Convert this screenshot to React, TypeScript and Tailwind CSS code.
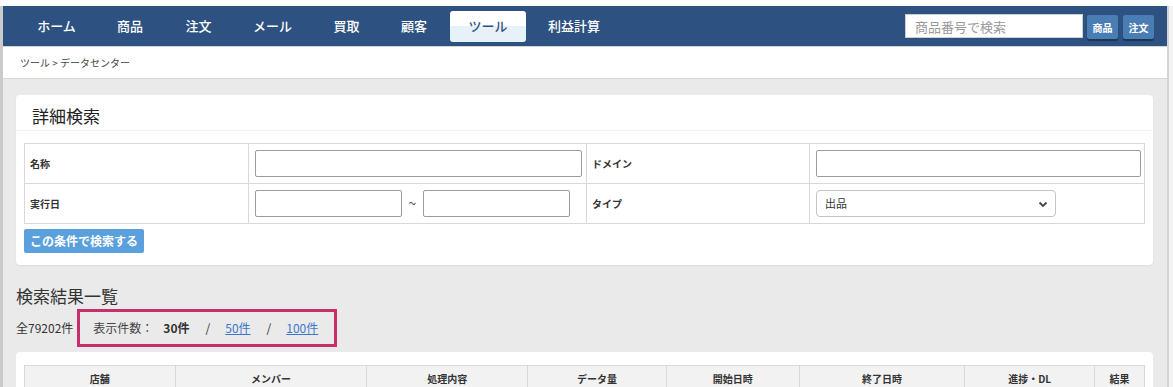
import React from "react";

const navItems = [
  { label: "ホーム", w: "w-[73px]" },
  { label: "商品", w: "w-[74px]" },
  { label: "注文", w: "w-[63px]" },
  { label: "メール", w: "w-[85px]" },
  { label: "買取", w: "w-[63px]" },
  { label: "顧客", w: "w-[72px]" },
  { label: "ツール", w: "w-[76px]", active: true },
  { label: "利益計算", w: "w-[96px]" },
];

const columns = [
  { label: "店舗", w: "w-[151px]" },
  { label: "メンバー", w: "w-[192px]" },
  { label: "処理内容", w: "w-[161px]" },
  { label: "データ量", w: "w-[139px]" },
  { label: "開始日時", w: "w-[133px]" },
  { label: "終了日時", w: "w-[166px]" },
  { label: "進捗・DL", w: "w-[130px]" },
  { label: "結果", w: "w-[50px]" },
];

function Header() {
  return (
    <div className="flex h-[40px] shrink-0 items-center bg-[#2d5281] pl-[17px] pr-[13px]">
      <nav className="flex items-center">
        {navItems.map((item) => (
          <a
            key={item.label}
            className={
              item.active
                ? `${item.w} flex h-[31px] items-center justify-center rounded-[3px] bg-gradient-to-b from-white from-50% to-[#e7f1f8] to-50% text-[13px] font-medium text-[#2d5281]`
                : `${item.w} flex h-[31px] items-center justify-center text-[13px] font-medium text-white`
            }
          >
            {item.label}
          </a>
        ))}
      </nav>
      <div className="ml-auto flex items-center">
        <input
          placeholder="商品番号で検索"
          className="h-[24px] w-[178px] border border-[#cfcfcf] bg-white px-[9px] text-[13px] text-[#333] placeholder:text-[#9a9a9a] outline-none"
        />
        <button className="ml-[4px] mt-[2px] h-[24px] w-[31px] rounded-[2px] bg-[#4a7db3] text-[10px] font-bold text-white shadow-[0_2px_1px_rgba(0,0,0,0.35)]">
          商品
        </button>
        <button className="ml-[5px] mt-[2px] h-[24px] w-[31px] rounded-[2px] bg-[#4a7db3] text-[10px] font-bold text-white shadow-[0_2px_1px_rgba(0,0,0,0.35)]">
          注文
        </button>
      </div>
    </div>
  );
}

function SearchCard() {
  return (
    <div className="rounded-[4px] bg-white shadow-[0_1px_2px_rgba(0,0,0,0.06)]">
      <div className="flex h-[36px] items-center border-b border-[#f1f1f1] pl-[16px]">
        <h2 className="mt-[6px] text-[17px] leading-none text-[#222]">詳細検索</h2>
      </div>
      <div className="px-[8px] pt-[12px] pb-[12px]">
        <table className="w-full border-collapse text-[10px] text-[#333]">
          <tbody>
            <tr className="h-[40px]">
              <td className="w-[224px] border border-[#d9d9d9] pl-[5px] font-bold">名称</td>
              <td className="w-[338px] border border-[#d9d9d9] pl-[6px] pr-[4px]">
                <input className="block h-[27px] w-full rounded-[2px] border border-[#9c9c9c] bg-white" />
              </td>
              <td className="w-[223px] border border-[#d9d9d9] pl-[5px] font-bold">ドメイン</td>
              <td className="border border-[#d9d9d9] pl-[6px] pr-[3px]">
                <input className="block h-[27px] w-full rounded-[2px] border border-[#9c9c9c] bg-white" />
              </td>
            </tr>
            <tr className="h-[40px]">
              <td className="border border-[#d9d9d9] pl-[5px] font-bold">実行日</td>
              <td className="border border-[#d9d9d9] pl-[6px]">
                <div className="flex items-center">
                  <input className="block h-[27px] w-[147px] rounded-[2px] border border-[#9c9c9c] bg-white" />
                  <span className="w-[21px] text-center text-[14px] text-[#555]">~</span>
                  <input className="block h-[27px] w-[147px] rounded-[2px] border border-[#9c9c9c] bg-white" />
                </div>
              </td>
              <td className="border border-[#d9d9d9] pl-[5px] font-bold">タイプ</td>
              <td className="border border-[#d9d9d9] pl-[6px]">
                <div className="flex h-[27px] w-[240px] items-center justify-between rounded-[4px] border border-[#c4c4c4] bg-white pl-[8px] pr-[6px]">
                  <span className="text-[11px] text-[#333]">出品</span>
                  <svg className="h-[12px] w-[12px]" viewBox="0 0 12 12" fill="none" stroke="#444" strokeWidth="1.8">
                    <path d="M2.5 4.5 6 8 9.5 4.5" />
                  </svg>
                </div>
              </td>
            </tr>
          </tbody>
        </table>
        <button className="mt-[5px] h-[24px] w-[120px] rounded-[2px] bg-[#5aa0dd] text-[12px] font-bold text-white">
          この条件で検索する
        </button>
      </div>
    </div>
  );
}

export default function App() {
  return (
    <div className="h-[387px] overflow-hidden bg-white font-['Noto_Sans_CJK_JP','Noto_Sans',sans-serif]">
      <div className="h-[6px] bg-white" />
      <div className="flex h-[381px]">
        <div className="w-[3px] shrink-0 bg-[#cbcbcb]" />
        <div className="flex w-[1164px] shrink-0 flex-col overflow-hidden bg-[#eaeaea]">
          <Header />
          <div className="flex h-[33px] shrink-0 items-center border-y border-[#d6d6d6] bg-white pl-[17px] text-[10px] text-[#444]">
            ツール &gt; データセンター
          </div>
          <div className="shrink-0 pl-[13px] pr-[14px] pt-[16px]">
            <SearchCard />

            <h2 className="mt-[21px] text-[17px] leading-[20px] text-[#333]">検索結果一覧</h2>
            <div className="mt-[3px] flex items-center text-[12px] text-[#333]">
              <span>全79202件</span>
              <div className="ml-[4px] flex h-[38px] w-[260px] items-center border-[3px] border-[#c5306a] pl-[13px]">
                <span className="text-[#444]">表示件数：</span>
                <span className="ml-[10px] font-bold">30件</span>
                <span className="ml-[16px]">/</span>
                <a className="ml-[15px] text-[#3a78cc] underline">50件</a>
                <span className="ml-[16px]">/</span>
                <a className="ml-[15px] text-[#3a78cc] underline">100件</a>
              </div>
            </div>

            <div className="mt-[5px] rounded-[4px] bg-white px-[8px] pt-[13px]">
              <table className="w-full border-collapse text-[10px] text-[#333]">
                <thead>
                  <tr className="h-[26px] bg-[#f2f2f2]">
                    {columns.map((c) => (
                      <th key={c.label} className={`${c.w} border border-[#d9d9d9] text-center font-bold`}>
                        {c.label}
                      </th>
                    ))}
                  </tr>
                </thead>
              </table>
            </div>
          </div>
        </div>
        <div className="w-[6px] shrink-0 border-l-[2px] border-[#d4d4d4] bg-[#f3f3f3]" />
      </div>
    </div>
  );
}
